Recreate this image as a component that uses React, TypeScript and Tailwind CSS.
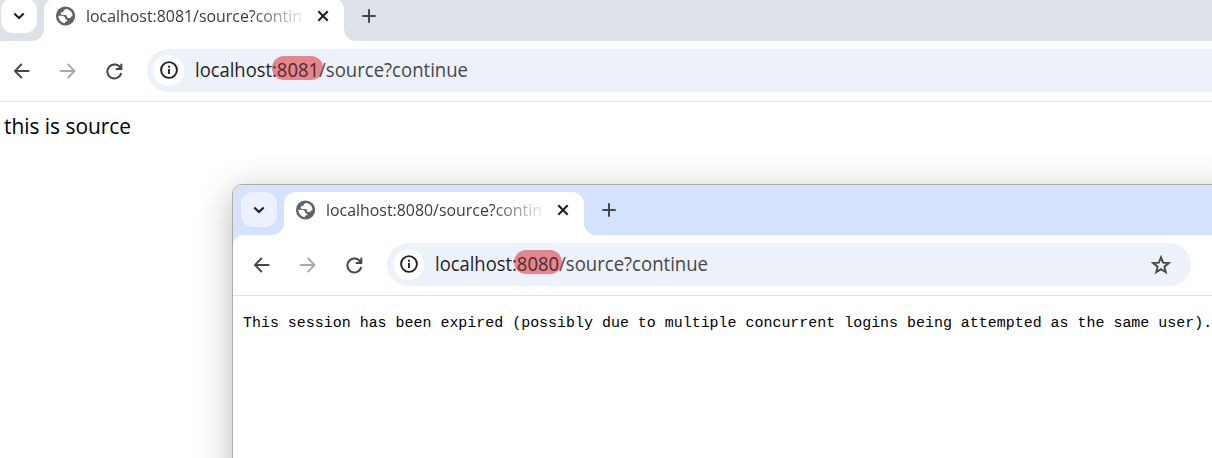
import type { ReactNode } from 'react';

const stroke = { fill: 'none', stroke: 'currentColor' } as const;

function Fit({ text, width, size, className = '' }: { text: string; width: number; size: number; className?: string }) {
  return (
    <svg width={width} height={size * 1.6} className={`shrink-0 overflow-visible ${className}`}>
      <text x="0" y={size * 1.15} fontSize={size} textLength={width} lengthAdjust="spacingAndGlyphs" fill="currentColor">
        {text}
      </text>
    </svg>
  );
}

function Globe() {
  return (
    <svg width="20" height="20" viewBox="1.500 2 20 20" className="shrink-0">
      <circle cx="12" cy="12" r="9.600" fill="#5f6368" />
      <g fill="#fff" transform="translate(1 1) scale(.915)">
        <path d="M13.600 4.300c-2 .2-3.700 1-3.700 2.200 0 .9-.6 1.200-1.400 1.200-1.100 0-1.700.6-1.700 1.600 0 1 .6 1.500 1.600 1.500h3.300c1.300 0 1.900.8 1.900 1.900 0 1.100.500 1.600 1.500 1.600h1.100c.9 0 1.300-.3 1.500-1 .2-.7.700-1 1.900-1a7.800 7.800 0 0 0-6-8Z" />
        <path d="M4.200 11.800h3.500c2.200 0 4 1.300 4 2.900 0 .8.400 1.100 1.100 1.100.9 0 1.200.5 1.200 1.200 0 .8-.6 1.100-1.500 1.100-.9 0-1.100.5-1.100 1.800a7.800 7.800 0 0 1-7.200-8.100Z" />
      </g>
    </svg>
  );
}

interface WindowProps {
  port: string;
  strip: string;
  button: string;
  omnibox: string;
  marker: string;
  starred?: boolean;
  children: ReactNode;
}

function BrowserWindow({ port, strip, button, omnibox, marker, starred, children }: WindowProps) {
  return (
    <div className="flex w-full flex-col bg-white">
      <div className={`flex h-[50px] items-end ${strip}`}>
        <div className={`mb-2 ml-2 flex h-[35px] w-9 shrink-0 items-center justify-center rounded-[12px] text-[#1f1f1f] ${button}`}>
          <svg width="12" height="8" viewBox="0 0 12 8" {...stroke} strokeWidth="2.1">
            <path d="M1.3 1.500 6 6l4.700-4.500" />
          </svg>
        </div>
        <svg width="12" height="12" className="-ml-[5px] shrink-0" fill="#fff">
          <path d="M12 0v12H0A12 12 0 0 0 12 0Z" />
        </svg>
        <div className="flex h-[43px] w-[300px] shrink-0 items-center rounded-t-[12px] bg-white pl-[11px] text-[#1f1f1f]">
          <div className="-mt-[8px]"><Globe /></div>
          <div className="-mt-[5px] ml-[11px] h-[26px] w-[217px] overflow-hidden [mask-image:linear-gradient(to_right,#000_165px,transparent_222px)]">
            <Fit text={`localhost:${port}/source?contin`} width={216} size={16} className="text-[#3c3c3c]" />
          </div>
          <svg width="12" height="12" viewBox="0 0 12 12" {...stroke} strokeWidth="2.1" className="-mt-[7px] ml-[14px]">
            <path d="m1.300 1.300 9.400 9.400m0-9.400-9.400 9.400" />
          </svg>
        </div>
        <svg width="12" height="12" className="shrink-0" fill="#fff">
          <path d="M0 0v12h12A12 12 0 0 1 0 0Z" />
        </svg>
        <svg width="14" height="14" viewBox="0 0 14 14" {...stroke} strokeWidth="2" className="mb-[18px] ml-[6px] shrink-0 text-[#474747]">
          <path d="M7 .3v13.400M.3 7h13.400" />
        </svg>
      </div>
      <div className={strip}>
        <div className="flex h-[61px] items-center rounded-tl-[10px] border-b border-[#dfe0e1] bg-white pl-5 text-[#474747]">
          <svg width="16" height="16" viewBox="-.5 0 16 16" {...stroke} strokeWidth="1.9" className="shrink-0 overflow-visible">
            <path d="M15.800 8H1.800M8.300 1 1.500 8l6.800 7" />
          </svg>
          <svg width="16" height="16" viewBox="0 0 16 16" {...stroke} strokeWidth="1.9" className="ml-[31px] shrink-0 text-[#a9a9a9]">
            <path d="M.2 8h14M7.700 1l6.800 7-6.800 7" />
          </svg>
          <svg width="17" height="17" viewBox="0 0 17 17" {...stroke} strokeWidth="2" className="ml-[30px] shrink-0">
            <path d="M14.600 5.300A7 7 0 1 0 15.200 10M15.300.8v5.300H9.800" />
          </svg>
          <div className={`mb-[2px] ml-[24px] flex h-[43px] shrink-0 items-center rounded-full bg-[#ecf1fa] pl-[6px] ${omnibox}`}>
            <div className="flex size-[31px] shrink-0 items-center justify-center rounded-full bg-white text-[#1f1f1f]">
              <svg width="18" height="18" viewBox="0 0 18 18" {...stroke} strokeWidth="1.900">
                <circle cx="9" cy="9" r="7.900" />
                <path d="M9 8v5M9 4.800v2" />
              </svg>
            </div>
            <div className="relative ml-[11px] flex h-[32px] w-[273px] shrink-0 pt-px">
              <div className={`absolute top-[2px] h-6 rounded-full bg-[#e6858c] ${marker}`} />
              <Fit text="localhost" width={77} size={19.5} className="relative text-[#1f1f1f]" />
              <Fit text={`:${port}`} width={47} size={19.5} className="relative text-[#4b2a2f]" />
              <Fit text="/source?continue" width={149} size={19.5} className="relative text-[#474747]" />
            </div>
            {starred && (
              <svg width="20" height="20" viewBox="0 0 20 20" {...stroke} strokeWidth="1.900" className="mt-px ml-[443px] shrink-0">
                <path d="m10 2.400 2.100 5.300 5.700.4-4.400 3.600 1.400 5.500L10 14.200l-4.800 3 1.400-5.500L2.200 8.100l5.700-.4Z" />
              </svg>
            )}
          </div>
        </div>
      </div>
      {children}
    </div>
  );
}

export default function App() {
  return (
    <div className="relative h-[458px] w-full overflow-hidden bg-white font-['Open_Sans','Noto_Sans',sans-serif]">
      <div className="-mt-[9px] -ml-[7px] flex">
        <BrowserWindow port="8081" strip="bg-[#dde2e9]" button="bg-white" omnibox="w-[1100px]" marker="left-[77px] w-[51px]">
          <div className="pt-[7px] pl-[11px] text-black">
            <Fit text="this is source" width={127} size={22} />
          </div>
        </BrowserWindow>
      </div>
      <div className="absolute top-[184px] left-[232px] h-[300px] w-[1000px] overflow-hidden rounded-tl-[10px] border border-[#acacac] bg-white shadow-[0_8px_36px_rgba(0,0,0,0.28)]">
        <BrowserWindow port="8080" strip="bg-[#d3e2fd]" button="bg-[#ebf1fe]" omnibox="w-[804px]" marker="left-[79px] w-[48px]" starred>
          <p className="pt-[16px] pl-[10px] font-['Liberation_Mono',monospace] text-[14.960px] leading-[22px] whitespace-nowrap text-black">
            This session has been expired (possibly due to multiple concurrent logins being attempted as the same user).
          </p>
        </BrowserWindow>
      </div>
    </div>
  );
}
